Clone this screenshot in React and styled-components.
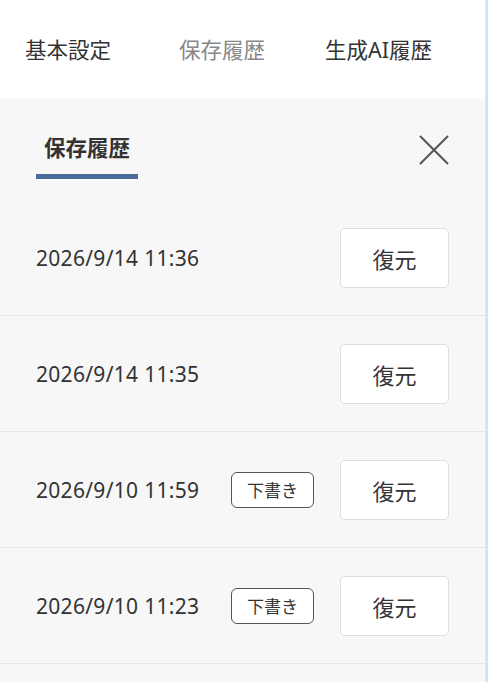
import React from 'react';
import styled, { createGlobalStyle } from 'styled-components';

const GlobalStyle = createGlobalStyle`
  html, body {
    margin: 0;
    padding: 0;
    background: #cfe2f8;
  }
  body {
    font-family: "Noto Sans", "Noto Sans CJK JP", sans-serif;
    color: #333;
  }
`;

const histories = [
  { id: 1, date: '2026/9/14 11:36', draft: false },
  { id: 2, date: '2026/9/14 11:35', draft: false },
  { id: 3, date: '2026/9/10 11:59', draft: true },
  { id: 4, date: '2026/9/10 11:23', draft: true },
];

const tabs = [
  { key: 'basic', label: '基本設定', width: 154 },
  { key: 'history', label: '保存履歴', width: 146, muted: true },
  { key: 'ai', label: '生成AI履歴' },
];

export default function App() {
  return (
    <>
      <GlobalStyle />
      <Page>
        <TabBar>
          {tabs.map((tab) => (
            <Tab key={tab.key} $muted={tab.muted} $width={tab.width}>
              {tab.label}
            </Tab>
          ))}
        </TabBar>
        <Panel>
          <PanelHeader>
            <PanelTitle>保存履歴</PanelTitle>
            <CloseButton aria-label="閉じる">
              <svg width="30" height="30" viewBox="0 0 30 30">
                <path
                  d="M1 1 L29 29 M29 1 L1 29"
                  stroke="#555"
                  strokeWidth="2"
                  fill="none"
                />
              </svg>
            </CloseButton>
          </PanelHeader>
          <HistoryList>
            {histories.map((item) => (
              <HistoryRow key={item.id}>
                <DateText>{item.date}</DateText>
                <RowActions>
                  {item.draft && <DraftBadge>下書き</DraftBadge>}
                  <RestoreButton>復元</RestoreButton>
                </RowActions>
              </HistoryRow>
            ))}
          </HistoryList>
        </Panel>
      </Page>
    </>
  );
}

const Page = styled.div`
  width: 485px;
  height: 682px;
  overflow: hidden;
  background: #fff;
  border-right: 1px solid #e6e6e6;
  display: flex;
  flex-direction: column;
`;

const TabBar = styled.nav`
  display: flex;
  align-items: center;
  height: 99px;
  padding-left: 25px;
  flex-shrink: 0;
`;

const Tab = styled.div`
  width: ${(p) => (p.$width ? `${p.$width}px` : 'auto')};
  font-size: 21.5px;
  line-height: 1;
  color: ${(p) => (p.$muted ? '#888' : '#333')};
  cursor: pointer;
`;

const Panel = styled.section`
  flex: 1;
  background: #f7f7f7;
  display: flex;
  flex-direction: column;
`;

const PanelHeader = styled.div`
  display: flex;
  justify-content: space-between;
  align-items: flex-start;
  height: 101px;
  padding: 0 36px;
  flex-shrink: 0;
`;

const PanelTitle = styled.h2`
  margin: 32px 0 0;
  padding: 0 8px 10px;
  font-size: 21.5px;
  line-height: 33px;
  font-weight: 700;
  color: #333;
  border-bottom: 5px solid #4a6c9b;
`;

const CloseButton = styled.button`
  margin-top: 36px;
  padding: 0;
  border: none;
  background: none;
  width: 30px;
  height: 30px;
  cursor: pointer;
  svg {
    display: block;
  }
`;

const HistoryList = styled.ul`
  list-style: none;
  margin: 0;
  padding: 0;
`;

const HistoryRow = styled.li`
  display: flex;
  align-items: center;
  justify-content: space-between;
  box-sizing: border-box;
  height: 116px;
  padding: 0 36px;
  border-bottom: 1px solid #e6e6e6;
`;

const DateText = styled.span`
  font-size: 21px;
  color: #333;
  letter-spacing: 0.3px;
`;

const RowActions = styled.div`
  display: flex;
  align-items: center;
  gap: 26px;
`;

const DraftBadge = styled.span`
  display: flex;
  align-items: center;
  justify-content: center;
  box-sizing: border-box;
  width: 83px;
  height: 36px;
  border: 1px solid #555;
  border-radius: 6px;
  background: #fff;
  font-size: 17px;
  color: #333;
`;

const RestoreButton = styled.button`
  box-sizing: border-box;
  width: 109px;
  height: 60px;
  background: #fff;
  border: 1px solid #dedede;
  border-radius: 5px;
  font-family: inherit;
  font-size: 22px;
  color: #333;
  cursor: pointer;
`;
